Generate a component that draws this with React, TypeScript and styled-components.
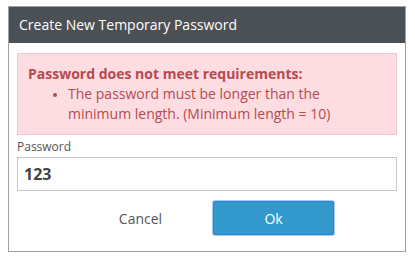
import React from 'react';
import styled, {createGlobalStyle} from 'styled-components';

const GlobalStyle = createGlobalStyle`
  body { margin: 0; background: #fff; font-family: "Open Sans", "Noto Sans", sans-serif; }
`;

const Dialog = styled.div`
  box-sizing: border-box;
  width: 398px;
  margin: 6px 0 0 8px;
  border: 1px solid #a0a0a0;
  background: #fff;
`;

const Header = styled.div`
  height: 36px;
  background: #4b5055;
  color: #fff;
  font-size: 14px;
  line-height: 36px;
  padding-left: 10px;
`;

const Body = styled.div`
  padding: 10px 8px 16px 8px;
`;

const Alert = styled.div`
  box-sizing: border-box;
  height: 82px;
  border: 1px solid #f9c4cf;
  background: #fddde2;
  color: #b8494f;
  padding: 10px 10px;
  font-size: 14px;
  line-height: 20px;
`;

const AlertTitle = styled.div`font-weight: bold;`;

const List = styled.ul`
  margin: 0;
  padding-left: 40px;
  li::marker { font-size: 12px; }
`;

const Label = styled.label`
  display: block;
  margin-top: 3px;
  font-size: 12px;
  line-height: 18px;
  color: #555;
`;

const Input = styled.input`
  box-sizing: border-box;
  display: block;
  width: 100%;
  height: 34px;
  margin-top: 1px;
  border: 1px solid #c8c8c8;
  padding: 0 6px;
  font-family: "Open Sans", sans-serif;
  font-size: 16px;
  font-weight: bold;
  color: #444;
  outline: none;
`;

const Actions = styled.div`
  display: flex;
  justify-content: center;
  gap: 12px;
  margin-top: 10px;
`;

const Button = styled.button<{ $primary?: boolean }>`
  box-sizing: border-box;
  width: 121px;
  height: 34px;
  border-radius: 2px;
  font-family: "Open Sans", sans-serif;
  font-size: 14px;
  cursor: pointer;
  border: 1px solid ${p => p.$primary ? '#2b7fd4' : 'transparent'};
  background: ${p => p.$primary ? '#3399cc' : 'transparent'};
  color: ${p => p.$primary ? '#fff' : '#555'};
  box-shadow: ${p => p.$primary ? '0 0 0 1px #a9cdf5' : 'none'};
`;

export default function App() {
    return (
        <>
            <GlobalStyle/>
            <Dialog>
                <Header>Create New Temporary Password</Header>
                <Body>
                    <Alert>
                        <AlertTitle>Password does not meet requirements:</AlertTitle>
                        <List>
                            <li>The password must be longer than the minimum length. (Minimum length = 10)</li>
                        </List>
                    </Alert>
                    <Label htmlFor="pw">Password</Label>
                    <Input id="pw" defaultValue="123"/>
                    <Actions>
                        <Button>Cancel</Button>
                        <Button $primary>Ok</Button>
                    </Actions>
                </Body>
            </Dialog>
        </>
    );
};
